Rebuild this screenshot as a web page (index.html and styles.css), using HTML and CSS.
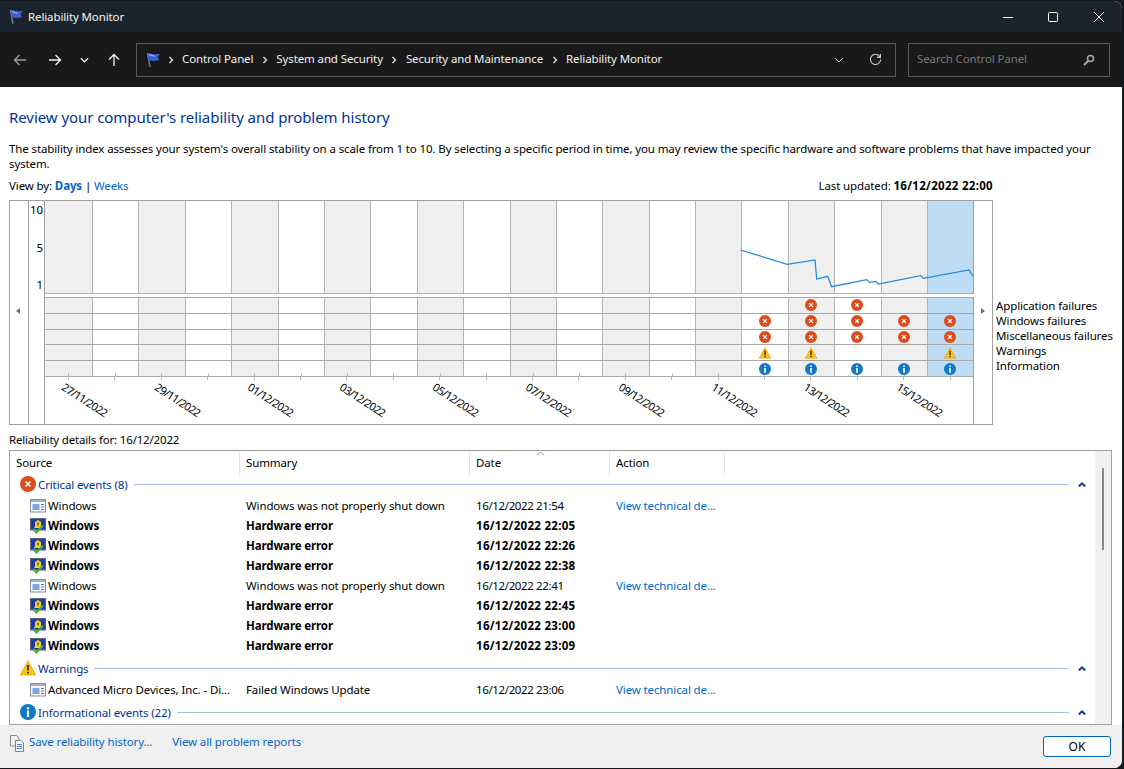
FILE: index.html
```html
<!DOCTYPE html>
<html lang="en">
<head>
<meta charset="utf-8">
<title>Reliability Monitor</title>
<link rel="stylesheet" href="styles.css">
</head>
<body>
<svg class="defs" aria-hidden="true">
  <symbol id="flag" viewBox="0 0 16 16">
    <path d="M2.500 1l2.500 14" stroke="#6f7480" stroke-width="1.600" fill="none"/>
    <path d="M3 1.500c3-1 4 .8 6.500.8 1.500 0 3-.6 5.500-.3l-2.600 3 1.800 3.200c-2.500-.2-3.600.8-5.500.8-2 0-3.300-1.300-5.300-.6z" fill="#3a62d8"/>
    <path d="M4 3c2.500-.5 3.500 1 6 1.200" stroke="#8fb0ff" stroke-width="1.200" fill="none"/>
  </symbol>
  <symbol id="err" viewBox="0 0 16 16">
    <circle cx="8" cy="8" r="8" fill="#dc4c1c"/>
    <path d="M5.500 5.500l5 5M10.500 5.500l-5 5" stroke="#fff" stroke-width="1.600"/>
  </symbol>
  <symbol id="warn" viewBox="0 0 16 16">
    <path d="M8 .8L15.800 15H.2z" fill="#fcc419" stroke="#e09a00" stroke-width=".7"/>
    <path d="M8 5v5.500M8 11.800v1.700" stroke="#3a2a00" stroke-width="1.800"/>
  </symbol>
  <symbol id="info" viewBox="0 0 16 16">
    <circle cx="8" cy="8" r="8" fill="#0f78c8"/>
    <path d="M8 3.200v2M8 6.500v6.500" stroke="#fff" stroke-width="2.200"/>
  </symbol>
  <symbol id="winlog" viewBox="0 0 16 16">
    <rect x=".5" y="1.500" width="15" height="12.500" fill="#f6f8fc" stroke="#8590a0"/>
    <rect x="1" y="2" width="14" height="2" fill="#a4aebc"/>
    <rect x="2.500" y="6" width="7" height="6" fill="#7ba8e4"/>
    <path d="M11 6.500h3M11 9h3M11 11.500h3" stroke="#6a7686"/>
  </symbol>
  <symbol id="hw" viewBox="0 0 16 16">
    <rect x=".5" y=".5" width="15" height="11.500" fill="#2443b4" stroke="#5a6680"/>
    <rect x="1.500" y="1.500" width="13" height="9.500" fill="#1f3aa8"/>
    <path d="M8 2l3 2v4l1 2H4l1-2V4z" fill="#f2d21e"/>
    <path d="M8 4.500v3" stroke="#5a4608" stroke-width="1.300"/>
    <path d="M3.500 11l3 3.500 6.500-7" stroke="#3fb52e" stroke-width="2.200" fill="none"/>
  </symbol>
  <symbol id="collapse" viewBox="0 0 10 8">
    <path d="M1 6.500l4-4 4 4" stroke="#0a3a96" stroke-width="2.400" fill="none"/>
  </symbol>
  <symbol id="crumb" viewBox="0 0 6 8">
    <path d="M1.500 1l3 3-3 3" stroke="#e8e8e8" stroke-width="1.300" fill="none"/>
  </symbol>
</svg>

<div class="window">
  <header class="titlebar">
    <svg class="title-icon"><use href="#flag"/></svg>
    <span class="title-text">Reliability Monitor</span>
    <div class="win-controls">
      <svg class="win-btn" viewBox="0 0 10 10"><path d="M0 5.500h10" stroke="#fff" fill="none"/></svg>
      <svg class="win-btn" viewBox="0 0 10 10"><rect x=".5" y=".5" width="9" height="9" rx="1" stroke="#fff" fill="none"/></svg>
      <svg class="win-btn" viewBox="0 0 10 10"><path d="M0 0l10 10M10 0L0 10" stroke="#fff" fill="none"/></svg>
    </div>
  </header>

  <nav class="navbar">
    <div class="nav-buttons">
      <svg class="nav-icon" viewBox="0 0 14 14"><path d="M13 7H1.500M6.500 2l-5 5 5 5" stroke="#9a9a9a" stroke-width="1.400" fill="none"/></svg>
      <svg class="nav-icon" viewBox="0 0 14 14"><path d="M1 7h11.500M7.500 2l5 5-5 5" stroke="#f2f2f2" stroke-width="1.400" fill="none"/></svg>
      <svg class="nav-caret" viewBox="0 0 10 6"><path d="M1 1l4 4 4-4" stroke="#e8e8e8" stroke-width="1.400" fill="none"/></svg>
      <svg class="nav-up" viewBox="0 0 14 14"><path d="M7 13V1.500M2 6.500l5-5 5 5" stroke="#f2f2f2" stroke-width="1.300" fill="none"/></svg>
    </div>
    <div class="address">
      <svg class="addr-flag"><use href="#flag"/></svg>
      <svg class="crumb"><use href="#crumb"/></svg><span>Control Panel</span>
      <svg class="crumb"><use href="#crumb"/></svg><span>System and Security</span>
      <svg class="crumb"><use href="#crumb"/></svg><span>Security and Maintenance</span>
      <svg class="crumb"><use href="#crumb"/></svg><span>Reliability Monitor</span>
      <svg class="addr-caret" viewBox="0 0 10 6"><path d="M1 1l4 4 4-4" stroke="#cfcfcf" fill="none"/></svg>
      <svg class="addr-refresh" viewBox="0 0 14 14"><path d="M11.800 4.200A5.500 5.500 0 1 0 12.500 7" stroke="#cfcfcf" stroke-width="1.200" fill="none"/><path d="M12.300 1v3.700H8.600" stroke="#cfcfcf" stroke-width="1.200" fill="none"/></svg>
    </div>
    <div class="search">
      <span>Search Control Panel</span>
      <svg class="search-icon" viewBox="0 0 12 12"><circle cx="7.500" cy="4.500" r="3" stroke="#a8a8a8" stroke-width="1.500" fill="none"/><path d="M5.300 6.700L1 11" stroke="#a8a8a8" stroke-width="2"/></svg>
    </div>
  </nav>

  <main class="content">
    <h1 class="heading">Review your computer's reliability and problem history</h1>
    <p class="intro">The stability index assesses your system's overall stability on a scale from 1 to 10. By selecting a specific period in time, you may review the specific hardware and software problems that have impacted your system.</p>
    <div class="viewby">
      <span>View by: <a class="link strong">Days</a> | <a class="link">Weeks</a></span>
      <span>Last updated: <b>16/12/2022 22:00</b></span>
    </div>

    <div class="chart-row">
      <div class="chart">
        <div class="pane-left"><span class="arrow-left"></span></div>
        <div class="yaxis"><span>10</span><span>5</span><span>1</span></div>
        <div class="plot">
          <div class="cols">
            <div class="col"><div class="score"></div><div class="gap"></div><div class="cell"></div><div class="cell"></div><div class="cell"></div><div class="cell"></div><div class="cell"></div></div>
            <div class="col"><div class="score"></div><div class="gap"></div><div class="cell"></div><div class="cell"></div><div class="cell"></div><div class="cell"></div><div class="cell"></div></div>
            <div class="col"><div class="score"></div><div class="gap"></div><div class="cell"></div><div class="cell"></div><div class="cell"></div><div class="cell"></div><div class="cell"></div></div>
            <div class="col"><div class="score"></div><div class="gap"></div><div class="cell"></div><div class="cell"></div><div class="cell"></div><div class="cell"></div><div class="cell"></div></div>
            <div class="col"><div class="score"></div><div class="gap"></div><div class="cell"></div><div class="cell"></div><div class="cell"></div><div class="cell"></div><div class="cell"></div></div>
            <div class="col"><div class="score"></div><div class="gap"></div><div class="cell"></div><div class="cell"></div><div class="cell"></div><div class="cell"></div><div class="cell"></div></div>
            <div class="col"><div class="score"></div><div class="gap"></div><div class="cell"></div><div class="cell"></div><div class="cell"></div><div class="cell"></div><div class="cell"></div></div>
            <div class="col"><div class="score"></div><div class="gap"></div><div class="cell"></div><div class="cell"></div><div class="cell"></div><div class="cell"></div><div class="cell"></div></div>
            <div class="col"><div class="score"></div><div class="gap"></div><div class="cell"></div><div class="cell"></div><div class="cell"></div><div class="cell"></div><div class="cell"></div></div>
            <div class="col"><div class="score"></div><div class="gap"></div><div class="cell"></div><div class="cell"></div><div class="cell"></div><div class="cell"></div><div class="cell"></div></div>
            <div class="col"><div class="score"></div><div class="gap"></div><div class="cell"></div><div class="cell"></div><div class="cell"></div><div class="cell"></div><div class="cell"></div></div>
            <div class="col"><div class="score"></div><div class="gap"></div><div class="cell"></div><div class="cell"></div><div class="cell"></div><div class="cell"></div><div class="cell"></div></div>
            <div class="col"><div class="score"></div><div class="gap"></div><div class="cell"></div><div class="cell"></div><div class="cell"></div><div class="cell"></div><div class="cell"></div></div>
            <div class="col"><div class="score"></div><div class="gap"></div><div class="cell"></div><div class="cell"></div><div class="cell"></div><div class="cell"></div><div class="cell"></div></div>
            <div class="col"><div class="score"></div><div class="gap"></div><div class="cell"></div><div class="cell"></div><div class="cell"></div><div class="cell"></div><div class="cell"></div></div>
            <div class="col"><div class="score"></div><div class="gap"></div><div class="cell"></div>
              <div class="cell"><svg class="mark"><use href="#err"/></svg></div>
              <div class="cell"><svg class="mark"><use href="#err"/></svg></div>
              <div class="cell"><svg class="mark"><use href="#warn"/></svg></div>
              <div class="cell"><svg class="mark"><use href="#info"/></svg></div></div>
            <div class="col"><div class="score"></div><div class="gap"></div>
              <div class="cell"><svg class="mark"><use href="#err"/></svg></div>
              <div class="cell"><svg class="mark"><use href="#err"/></svg></div>
              <div class="cell"><svg class="mark"><use href="#err"/></svg></div>
              <div class="cell"><svg class="mark"><use href="#warn"/></svg></div>
              <div class="cell"><svg class="mark"><use href="#info"/></svg></div></div>
            <div class="col"><div class="score"></div><div class="gap"></div>
              <div class="cell"><svg class="mark"><use href="#err"/></svg></div>
              <div class="cell"><svg class="mark"><use href="#err"/></svg></div>
              <div class="cell"><svg class="mark"><use href="#err"/></svg></div>
              <div class="cell"></div>
              <div class="cell"><svg class="mark"><use href="#info"/></svg></div></div>
            <div class="col"><div class="score"></div><div class="gap"></div><div class="cell"></div>
              <div class="cell"><svg class="mark"><use href="#err"/></svg></div>
              <div class="cell"><svg class="mark"><use href="#err"/></svg></div>
              <div class="cell"></div>
              <div class="cell"><svg class="mark"><use href="#info"/></svg></div></div>
            <div class="col selected"><div class="score"></div><div class="gap"></div><div class="cell"></div>
              <div class="cell"><svg class="mark"><use href="#err"/></svg></div>
              <div class="cell"><svg class="mark"><use href="#err"/></svg></div>
              <div class="cell"><svg class="mark"><use href="#warn"/></svg></div>
              <div class="cell"><svg class="mark"><use href="#info"/></svg></div></div>
            <svg class="trend" viewBox="0 0 928 93"><polyline points="695.700,49 742.300,63.300 770,59 771.700,78 782.700,75.300 786.700,85.700 821.700,78.700 824.300,81.300 831,80.300 833.300,83 875.700,74.700 878.300,77.300 924,69 927.700,75" fill="none" stroke="#1e88e0" stroke-width="1.200"/></svg>
          </div>
          <div class="dates">
            <span>27/11/2022</span><span>29/11/2022</span><span>01/12/2022</span><span>03/12/2022</span><span>05/12/2022</span><span>07/12/2022</span><span>09/12/2022</span><span>11/12/2022</span><span>13/12/2022</span><span>15/12/2022</span>
          </div>
        </div>
        <div class="pane-right"><span class="arrow-right"></span></div>
      </div>
      <ul class="legend">
        <li>Application failures</li>
        <li>Windows failures</li>
        <li>Miscellaneous failures</li>
        <li>Warnings</li>
        <li>Information</li>
      </ul>
    </div>

    <div class="details-label">Reliability details for: 16/12/2022</div>

    <section class="list">
      <div class="list-main">
        <div class="list-head">
          <div class="hd c-source">Source</div>
          <div class="hd c-summary">Summary</div>
          <div class="hd c-date">Date<svg class="sort" viewBox="0 0 10 5"><path d="M1 4.500l4-3.500 4 3.500" stroke="#8a8a8a" fill="none"/></svg></div>
          <div class="hd c-action">Action</div>
        </div>

        <div class="group first">
          <svg class="group-icon"><use href="#err"/></svg>
          <span class="group-title">Critical events (8)</span>
          <span class="group-line"></span>
          <svg class="group-toggle"><use href="#collapse"/></svg>
        </div>
        <div class="row"><div class="c-source src"><svg class="row-icon"><use href="#winlog"/></svg><span>Windows</span></div><div class="c-summary">Windows was not properly shut down</div><div class="c-date">16/12/2022 21:54</div><a class="c-action link">View technical de...</a></div>
        <div class="row bold"><div class="c-source src"><svg class="row-icon"><use href="#hw"/></svg><span>Windows</span></div><div class="c-summary">Hardware error</div><div class="c-date">16/12/2022 22:05</div></div>
        <div class="row bold"><div class="c-source src"><svg class="row-icon"><use href="#hw"/></svg><span>Windows</span></div><div class="c-summary">Hardware error</div><div class="c-date">16/12/2022 22:26</div></div>
        <div class="row bold"><div class="c-source src"><svg class="row-icon"><use href="#hw"/></svg><span>Windows</span></div><div class="c-summary">Hardware error</div><div class="c-date">16/12/2022 22:38</div></div>
        <div class="row"><div class="c-source src"><svg class="row-icon"><use href="#winlog"/></svg><span>Windows</span></div><div class="c-summary">Windows was not properly shut down</div><div class="c-date">16/12/2022 22:41</div><a class="c-action link">View technical de...</a></div>
        <div class="row bold"><div class="c-source src"><svg class="row-icon"><use href="#hw"/></svg><span>Windows</span></div><div class="c-summary">Hardware error</div><div class="c-date">16/12/2022 22:45</div></div>
        <div class="row bold"><div class="c-source src"><svg class="row-icon"><use href="#hw"/></svg><span>Windows</span></div><div class="c-summary">Hardware error</div><div class="c-date">16/12/2022 23:00</div></div>
        <div class="row bold"><div class="c-source src"><svg class="row-icon"><use href="#hw"/></svg><span>Windows</span></div><div class="c-summary">Hardware error</div><div class="c-date">16/12/2022 23:09</div></div>

        <div class="group">
          <svg class="group-icon"><use href="#warn"/></svg>
          <span class="group-title">Warnings</span>
          <span class="group-line"></span>
          <svg class="group-toggle"><use href="#collapse"/></svg>
        </div>
        <div class="row"><div class="c-source src"><svg class="row-icon"><use href="#winlog"/></svg><span>Advanced Micro Devices, Inc. - Di...</span></div><div class="c-summary">Failed Windows Update</div><div class="c-date">16/12/2022 23:06</div><a class="c-action link">View technical de...</a></div>

        <div class="group">
          <svg class="group-icon"><use href="#info"/></svg>
          <span class="group-title">Informational events (22)</span>
          <span class="group-line"></span>
          <svg class="group-toggle"><use href="#collapse"/></svg>
        </div>
      </div>
      <div class="scrollbar"><div class="thumb"></div></div>
    </section>
  </main>

  <footer class="footer">
    <svg class="foot-icon" viewBox="0 0 14 17"><path d="M.5.5h6l2.500 2.500v8H.5z" fill="#f0f0f0" stroke="#8a8a8a"/><path d="M5.500 5.500h5.500l2.500 2.500v8.500h-8z" fill="#fbfbfb" stroke="#7a8592"/><path d="M7 9.500h5M7 11.500h5M7 13.500h5" stroke="#3f82d6"/></svg>
    <a class="link foot-save">Save reliability history...</a>
    <a class="link">View all problem reports</a>
    <button class="ok">OK</button>
  </footer>
</div>
</body>
</html>
```
FILE: styles.css
```css
* { box-sizing: border-box; }
html, body { margin: 0; height: 100%; }
body {
  background: #15181c;
  font-family: "Noto Sans", "Open Sans", sans-serif;
  font-size: 11.5px;
  letter-spacing: -0.12px;
  color: #000;
  overflow: hidden;
}
.defs { width: 0; height: 0; position: absolute; }
.link { color: #0066cc; text-decoration: none; }
.strong { font-weight: 700; }

.window {
  width: 1122px;
  height: 767px;
  margin-top: 1px;
  display: flex;
  flex-direction: column;
  border-radius: 0 8px 8px 0;
  overflow: hidden;
  background: #fff;
}

.titlebar {
  height: 31px;
  background: #1b232c;
  color: #f4f4f4;
  display: flex;
  align-items: center;
  padding-left: 8px;
  flex: none;
}
.title-icon { width: 16px; height: 16px; margin-right: 4px; }
.win-controls { margin-left: auto; display: flex; gap: 35px; padding-right: 18px; }
.win-btn { width: 10px; height: 10px; }
.win-btn:last-child { margin-left: 1px; }

.navbar {
  height: 55px;
  background: #191919;
  display: flex;
  align-items: center;
  flex: none;
  color: #f0f0f0;
}
.nav-buttons { width: 136px; display: flex; align-items: center; padding-left: 13px; flex: none; }
.nav-icon { width: 14px; height: 14px; }
.nav-icon + .nav-icon { margin-left: 21px; }
.nav-caret { width: 9px; height: 6px; margin: 0 18px 0 18px; }
.nav-up { width: 14px; height: 14px; }
.address {
  width: 760px;
  height: 34px;
  border: 1px solid #5a5a5a;
  display: flex;
  align-items: center;
  padding-left: 8px;
  flex: none;
}
.addr-flag { width: 16px; height: 16px; margin-right: -2px; }
.crumb { width: 6px; height: 8px; margin: 0 8.500px; flex: none; }
.address span, .search span { padding-bottom: 2px; }
.addr-caret { width: 10px; height: 6px; margin-left: auto; }
.addr-refresh { width: 13px; height: 13px; margin: 0 13px 0 25px; }
.search {
  width: 202px;
  height: 34px;
  margin-left: 12px;
  border: 1px solid #5a5a5a;
  display: flex;
  align-items: center;
  justify-content: space-between;
  padding: 0 14px 0 8px;
  color: #767676;
  flex: none;
}
.search-icon { width: 12px; height: 12px; }

.content { flex: 1; padding: 0 9px; display: flex; flex-direction: column; min-height: 0; }
.heading { margin: 20px 0 0; font-size: 15px; font-weight: 400; line-height: 20px; color: #003399; letter-spacing: -0.06px; }
.intro { margin: 14px 0 0; width: 1090px; line-height: 15px; }
.viewby { width: 984px; margin-top: 7px; line-height: 16px; display: flex; justify-content: space-between; }
.viewby b { letter-spacing: 0.3px; }

.chart-row { display: flex; margin-top: 6px; }
.chart { width: 984px; height: 225px; border: 1px solid #a0a0a0; display: flex; flex: none; }
.pane-left { width: 19px; border-right: 1px solid #a0a0a0; flex: none; padding-top: 107px; padding-left: 6px; }
.arrow-left { display: block; width: 0; height: 0; border: 3.500px solid transparent; border-right: 4px solid #6e6e6e; border-left: 0; }
.pane-right { width: 20px; border-left: 1px solid #a0a0a0; flex: none; padding-top: 107px; padding-left: 7px; }
.arrow-right { display: block; width: 0; height: 0; border: 3.500px solid transparent; border-left: 4px solid #6e6e6e; border-right: 0; }
.yaxis { width: 16px; border-right: 1px solid #a0a0a0; flex: none; display: flex; flex-direction: column; align-items: flex-end; padding: 1px 1px 0 0; }
.yaxis span { height: 37.500px; line-height: 16px; }
.plot { width: 928px; flex: none; display: flex; flex-direction: column; }
.cols { display: flex; position: relative; height: 176px; flex: none; }
.col { width: 46.400px; flex: none; border-right: 1px solid #b4b4b4; }
.col:first-child { width: 48px; }
.col:nth-child(odd) { background: #efefef; }
.col.selected { width: 44.800px; background: #bfdcf5; border-right: 0; }
.score { height: 93px; border-bottom: 1px solid #b0b0b0; }
.gap { height: 4px; background: #fff; border-bottom: 1px solid #a8a8a8; margin-right: -1px; }
.cell { height: 15.800px; border-bottom: 1px solid #a8a8a8; margin-right: -1px; padding-right: 2px; display: flex; align-items: center; justify-content: center; position: relative; }
.cell:last-child::after { content: ""; position: absolute; left: 22px; bottom: -1px; width: 1px; height: 4px; background: #bbb; }
.col:first-child .cell:last-child::after { left: 23px; }
.mark { width: 12px; height: 12px; position: relative; z-index: 1; }
.trend { position: absolute; left: 0; top: 0; width: 928px; height: 93px; }
.dates {
  display: flex;
  flex: 1;
  padding-left: 18px;
  background-image: repeating-linear-gradient(90deg, transparent 0, transparent 23px, #bbb 23px, #bbb 24px, transparent 24px, transparent 46.400px);
  background-size: 100% 3px;
  background-repeat: no-repeat;
}
.dates span {
  width: 92.800px;
  flex: none;
  font-size: 11px;
  letter-spacing: -0.7px;
  line-height: 14px;
  height: 14px;
  white-space: nowrap;
  margin-top: 2px;
  transform: rotate(33deg);
  transform-origin: 0 50%;
}

.legend { list-style: none; margin: 0; padding: 98px 0 0 3px; line-height: 15px; white-space: nowrap; }

.details-label { margin-top: 7px; line-height: 16px; letter-spacing: -0.18px; }

.list {
  width: 1103px;
  margin-top: 2px;
  flex: 1;
  min-height: 0;
  border: 1px solid #a0a0a0;
  display: flex;
  overflow: hidden;
}
.list-main { flex: 1; min-width: 0; }
.list-head { display: flex; height: 24px; }
.hd { border-right: 1px solid #e4e4e4; padding-top: 4px; line-height: 16px; position: relative; }
.c-source { width: 230px; padding-left: 6px; flex: none; }
.c-summary { width: 230px; padding-left: 6px; flex: none; white-space: nowrap; }
.c-date { width: 140px; padding-left: 6px; flex: none; }
.c-action { width: 115px; padding-left: 6px; flex: none; white-space: nowrap; }
.row .c-date { letter-spacing: -0.37px; }
.row.bold .c-date { letter-spacing: 0.3px; }
.sort { position: absolute; left: 66px; top: 0; width: 9px; height: 5px; }

.group { height: 18px; margin: 3px 0; display: flex; align-items: center; padding-left: 10px; color: #003399; }
.group.first { margin-top: 0; }
.group-icon { width: 16px; height: 16px; flex: none; margin-right: 2px; }
.group-line { flex: 1; height: 1px; background: #aabde6; margin-left: 6px; }
.group-toggle { width: 8px; height: 7px; margin: 0 9px; flex: none; }

.row { display: flex; height: 20px; line-height: 20px; align-items: center; }
.row.bold { font-weight: 700; }
.src { padding-left: 20px; display: flex; align-items: center; white-space: nowrap; overflow: hidden; }
.row-icon { width: 16px; height: 16px; margin-right: 2px; flex: none; }

.scrollbar { width: 16px; flex: none; background: #f0f0f0; padding: 17px 0 0 7px; }
.thumb { width: 2px; height: 82px; background: #8a8a8a; }

.footer {
  height: 43px;
  flex: none;
  background: #f0f0f0;
  display: flex;
  align-items: flex-start;
  padding: 10px 11px 0 10px;
  line-height: 16px;
}
.foot-icon { width: 14px; height: 17px; margin-right: 5px; }
.foot-save { margin-right: 20px; margin-top: -1px; }
.foot-save + .link { margin-top: -1px; }
.ok {
  margin-left: auto;
  margin-top: 1px;
  width: 68px;
  height: 21px;
  background: #fff;
  border: 1px solid #0067c0;
  border-radius: 3px;
  font: inherit;
  font-size: 12px;
  padding: 0;
  color: #000;
}
```
